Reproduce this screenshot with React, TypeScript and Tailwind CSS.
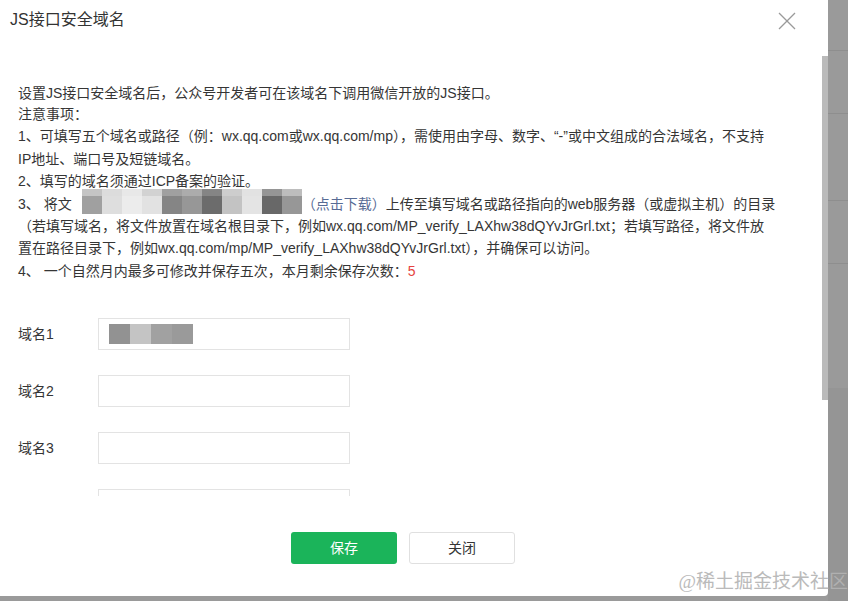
import React from "react";

const font = "font-['Liberation_Sans','Noto_Sans_CJK_SC',sans-serif]";

// mosaic used to hide the file name / domain
const mosaicTop = ["#c4c4c4", "#dcdcdc", "#e8e8e8", "#d2d2d2", "#a0a0a0", "#acacac", "#858585", "#cdcdcd", "#e2e2e2", "#959595", "#bdbdbd"];
const mosaicBottom = ["#a0a0a0", "#dedede", "#ececec", "#e2e2e2", "#858585", "#979797", "#6c6c6c", "#c3c3c3", "#e4e4e4", "#686868", "#979797"];
const inputMosaic = ["#929292", "#c4c4c4", "#a1a1a1", "#9a9a9a"];

function Mosaic() {
  return (
    <span className="inline-flex flex-col align-middle w-[230px] h-[26px] -mt-[4px] pl-[10px]">
      <span className="flex h-[7px]">
        {mosaicTop.map((c, i) => (
          <span key={i} className="flex-1" style={{ backgroundColor: c }} />
        ))}
      </span>
      <span className="flex h-[18px]">
        {mosaicBottom.map((c, i) => (
          <span key={i} className="flex-1" style={{ backgroundColor: c }} />
        ))}
      </span>
    </span>
  );
}

function DomainRow({ label, masked }: { label: string; masked?: boolean }) {
  return (
    <div className="flex items-center h-[32px] mb-[25px]">
      <span className="w-[80px] text-[14px] text-[#353535]">{label}</span>
      <div className="w-[252px] h-[32px] border border-[#e3e3e3] bg-white flex items-center pl-[12px]">
        {masked && (
          <div className="flex h-[20px] -ml-[2px]">
            {inputMosaic.map((c, i) => (
              <span key={i} className="w-[21px] h-full" style={{ backgroundColor: c }} />
            ))}
          </div>
        )}
      </div>
    </div>
  );
}

export default function App() {
  return (
    <div className={`${font} w-[848px] h-[601px] bg-[#9a9a9a] flex overflow-hidden relative`}>
      <div className="w-[828px] h-[596px] bg-white rounded-br-[4px] flex flex-col relative shrink-0">
        {/* Header */}
        <div className="h-[40px] flex items-center justify-between pl-[10px] pr-[32px]">
          <span className="text-[16px] text-[#333]">JS接口安全域名</span>
          <svg width="18" height="18" viewBox="0 0 18 18" className="mt-[1px]">
            <line x1="1" y1="1" x2="17" y2="17" stroke="#9a9a9a" strokeWidth="1.3" />
            <line x1="17" y1="1" x2="1" y2="17" stroke="#9a9a9a" strokeWidth="1.3" />
          </svg>
        </div>

        {/* Body */}
        <div className="h-[456px] overflow-hidden pl-[18px] pt-[43px] text-[14px] text-[#353535]">
          <div className="leading-[20px] whitespace-nowrap">设置JS接口安全域名后，公众号开发者可在该域名下调用微信开放的JS接口。</div>
          <div className="leading-[22.4px] whitespace-nowrap">
            <div>注意事项：</div>
            <div>1、可填写五个域名或路径（例：wx.qq.com或wx.qq.com/mp），需使用由字母、数字、“-”或中文组成的合法域名，不支持</div>
            <div>IP地址、端口号及短链域名。</div>
            <div>2、填写的域名须通过ICP备案的验证。</div>
            <div className="flex items-center h-[22.4px]">
              <span>3、 将文</span>
              <Mosaic />
              <span className="text-[#576b95]">（点击下载）</span>
              <span>上传至填写域名或路径指向的web服务器（或虚拟主机）的目录</span>
            </div>
            <div>（若填写域名，将文件放置在域名根目录下，例如wx.qq.com/MP_verify_LAXhw38dQYvJrGrl.txt；若填写路径，将文件放</div>
            <div>置在路径目录下，例如wx.qq.com/mp/MP_verify_LAXhw38dQYvJrGrl.txt），并确保可以访问。</div>
            <div>
              4、 一个自然月内最多可修改并保存五次，本月剩余保存次数：<span className="text-[#e64340]">5</span>
            </div>
          </div>

          <div className="mt-[36px]">
            <DomainRow label="域名1" masked />
            <DomainRow label="域名2" />
            <DomainRow label="域名3" />
            <DomainRow label="" />
          </div>
        </div>

        {/* Footer */}
        <div className="flex justify-center gap-[12px] pt-[36px] pr-[22px]">
          <button className="w-[106px] h-[32px] rounded-[3px] bg-[#1bb45a] text-white text-[14px]">保存</button>
          <button className="w-[106px] h-[32px] rounded-[3px] bg-white border border-[#e0e0e0] text-[#353535] text-[14px]">关闭</button>
        </div>

        {/* scrollbar */}
        <div className="absolute right-0 top-[56px] w-[6px] h-[344px] bg-[#bababa]" />
      </div>

      {/* page behind the overlay */}
      <div className="flex-1 flex flex-col">
        <div className="h-[51px] border-b border-[#8e8e8e]" />
        <div className="h-[63px] border-b border-[#8e8e8e]" />
        <div className="h-[87px] border-b border-[#8e8e8e]" />
        <div className="h-[63px] border-b border-[#8e8e8e]" />
        <div className="h-[124px]" />
        <div className="flex-1 bg-[#959595]" />
      </div>

      {/* watermark */}
      <div className="absolute right-0 bottom-[8px] text-[19px] leading-[22px] text-[#b3b3b3] font-['Liberation_Serif','Noto_Sans_CJK_SC',serif] opacity-90">
        @稀土掘金技术社区
      </div>
    </div>
  );
}
